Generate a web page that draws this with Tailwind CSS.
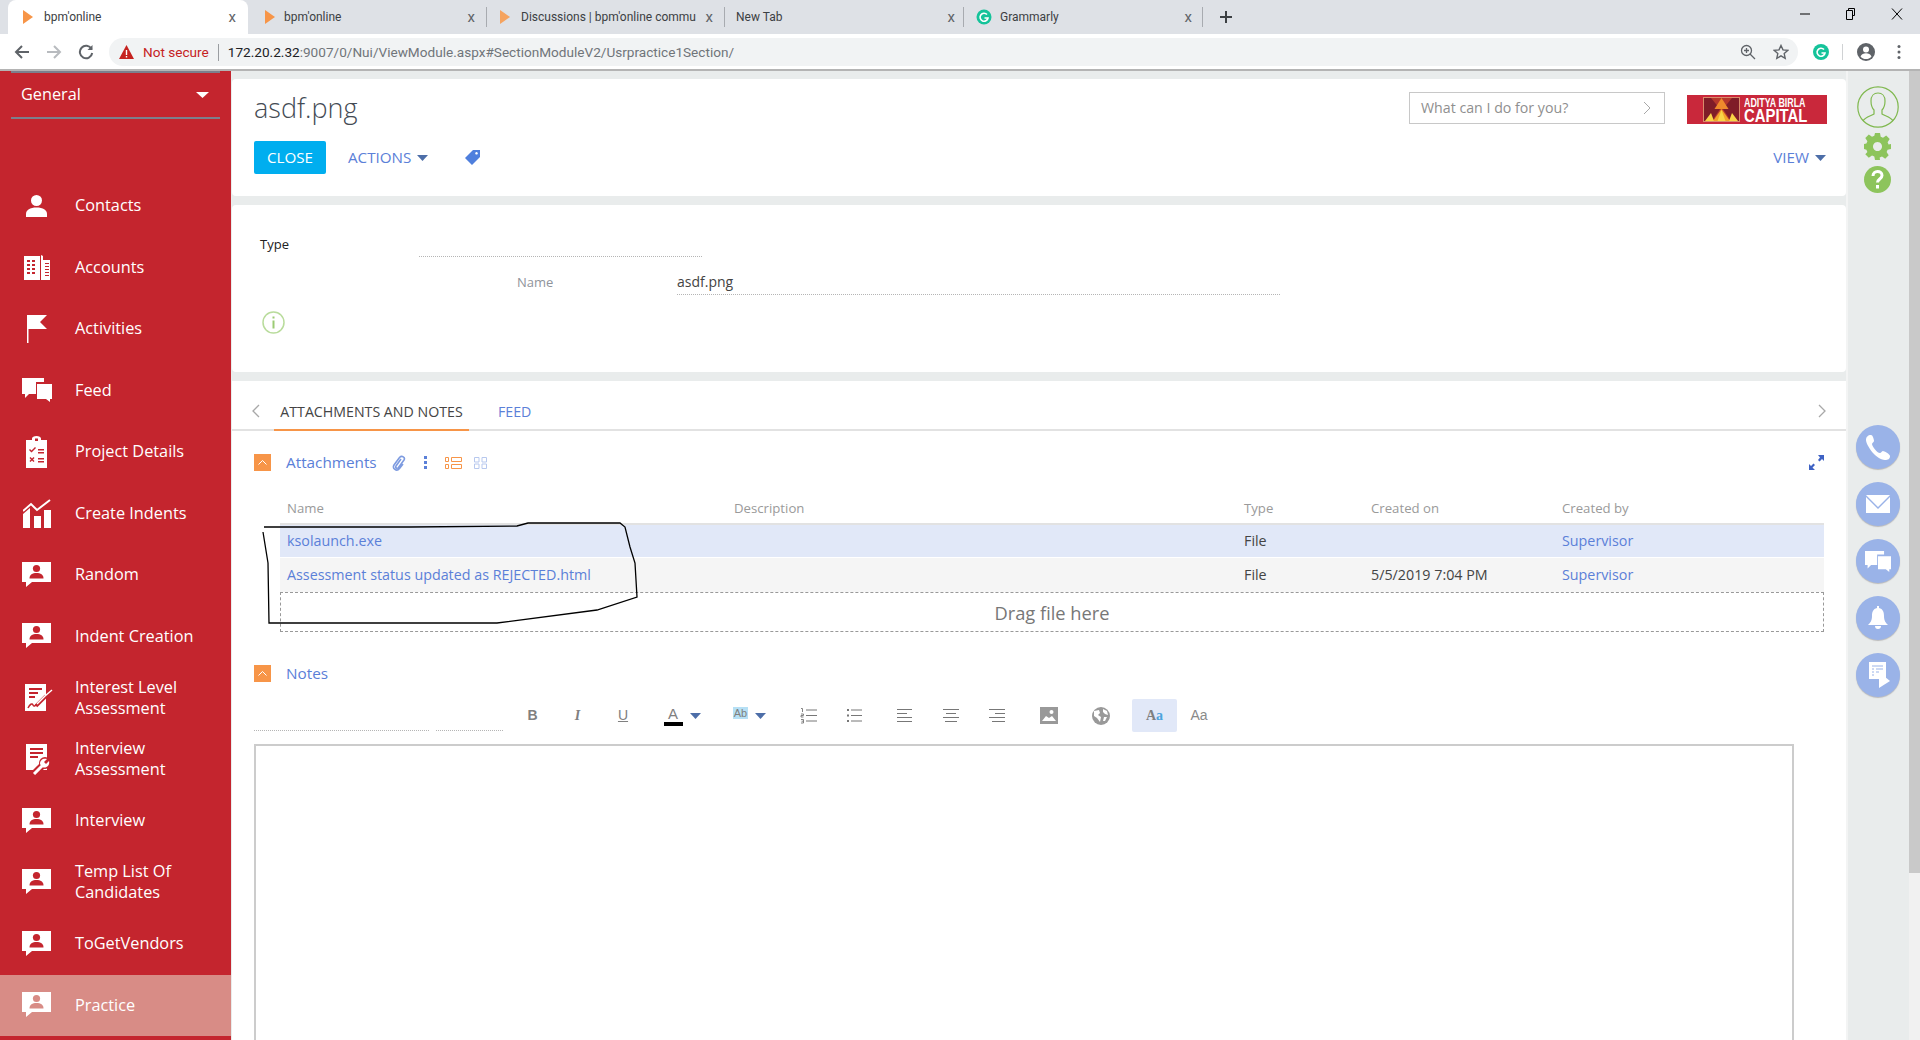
<!DOCTYPE html>
<html lang="en">
<head>
  <meta charset="UTF-8" />
  <title>bpm'online</title>
  <script src="https://cdn.jsdelivr.net/npm/@tailwindcss/browser@4"></script>
</head>
<body class="relative w-[1920px] h-[1040px] overflow-hidden flex flex-col bg-white font-['Open_Sans',sans-serif]">
  <svg class="hidden">
    <symbol id="card-person" viewBox="0 0 29 26">
      <path fill="#fff" d="M0 0h29v20H10l-6 5v-5H0z"/>
      <circle fill="currentColor" cx="14.5" cy="6.5" r="3.6"/>
      <path fill="currentColor" d="M7.5 16.5c0-4 3-5.500 7-5.500s7 1.500 7 5.500z"/>
    </symbol>
    <symbol id="chat" viewBox="0 0 30 24">
      <path fill="#fff" d="M0 0h22v4H14v12H7l-4 4v-4H0z"/>
      <path fill="#fff" d="M15 6h15v15h-2v3l-4-3h-9z"/>
    </symbol>
  </svg>

  <!-- browser tabs -->
  <div class="h-[34px] shrink-0 bg-[#dee1e6] flex pl-[8px] text-[12px] text-[#3c4043] font-['Roboto',sans-serif]">
    <div class="w-[240px] bg-white rounded-t-lg flex items-center pl-[15px] pr-[12px]">
      <svg class="w-[10px] h-[14px] mr-[11px] fill-[#f79548]" viewBox="0 0 10 14"><path d="M0 0l10 7-10 7z"/></svg>
      <span class="flex-1">bpm'online</span><span class="text-[#5f6368] text-[15px]">x</span>
    </div>
    <div class="w-[239px] flex items-center pl-[17px] pr-[11px] border-r border-[#a8abb0] my-[7px]">
      <svg class="w-[10px] h-[14px] mr-[9px] fill-[#f79548]" viewBox="0 0 10 14"><path d="M0 0l10 7-10 7z"/></svg>
      <span class="flex-1">bpm'online</span><span class="text-[#5f6368] text-[15px]">x</span>
    </div>
    <div class="w-[238px] flex items-center pl-[13px] pr-[11px] border-r border-[#a8abb0] my-[7px]">
      <svg class="w-[10px] h-[14px] mr-[11px] fill-[#f5a35f]" viewBox="0 0 10 14"><path d="M0 0l10 7-10 7z"/></svg>
      <span class="w-[176px] overflow-hidden whitespace-nowrap">Discussions | bpm'online commu</span><span class="flex-1 text-right text-[#5f6368] text-[15px]">x</span>
    </div>
    <div class="w-[239px] flex items-center pl-[11px] pr-[8px] border-r border-[#a8abb0] my-[7px]">
      <span class="flex-1">New Tab</span><span class="text-[#5f6368] text-[15px]">x</span>
    </div>
    <div class="w-[239px] flex items-center pl-[12px] pr-[10px] border-r border-[#a8abb0] my-[7px]">
      <svg class="w-[16px] h-[16px] mr-[8px]" viewBox="0 0 16 16"><circle cx="8" cy="8" r="7.500" fill="#15c39a"/><path d="M11 5.500A4 4 0 1 0 12 9H8.500" fill="none" stroke="#fff" stroke-width="1.600"/></svg>
      <span class="flex-1">Grammarly</span><span class="text-[#5f6368] text-[15px]">x</span>
    </div>
    <svg class="w-[14px] h-[14px] ml-[16px] mt-[10px] stroke-[#3c4043]" viewBox="0 0 14 14" fill="none" stroke-width="2"><path d="M7 1v12M1 7h12"/></svg>
    <div class="flex-1 flex justify-end pt-[8px] pr-[16px] gap-[32px]">
      <svg class="w-[14px] h-[12px] stroke-black" viewBox="0 0 14 12" fill="none"><path d="M2 6h10"/></svg>
      <svg class="w-[14px] h-[12px] stroke-black" viewBox="0 0 14 12" fill="none"><path d="M4.500 2.500V.5h6v7h-2M2.500 2.500h6v9h-6z"/></svg>
      <svg class="w-[14px] h-[12px] stroke-black" viewBox="0 0 14 12" fill="none"><path d="M2 .5l10 11M12 .5L2 11.500"/></svg>
    </div>
  </div>

  <!-- browser toolbar -->
  <div class="h-[37px] shrink-0 bg-white border-b-2 border-[#b4b4b4] flex items-start pt-[4px] font-['Roboto',sans-serif]">
    <div class="w-[109px] h-[28px] flex items-center pl-[14px] gap-[16px]">
      <svg class="w-[16px] h-[16px] stroke-[#5f6368]" viewBox="0 0 16 16" fill="none" stroke-width="2"><path d="M15 8H2M8 2L2 8l6 6"/></svg>
      <svg class="w-[16px] h-[16px] stroke-[#b8bbbf]" viewBox="0 0 16 16" fill="none" stroke-width="2"><path d="M1 8h13M8 2l6 6-6 6"/></svg>
      <svg class="w-[16px] h-[16px] stroke-[#5f6368]" viewBox="0 0 16 16" fill="none" stroke-width="2"><path d="M13.500 5A6.200 6.200 0 1 0 14.200 9"/><path d="M14.500 1v5h-5" fill="#5f6368" stroke="none"/></svg>
    </div>
    <div class="w-[1689px] h-[28px] bg-[#f1f3f4] rounded-full flex items-center pl-[10px] pr-[9px] text-[13.600px]">
      <svg class="w-[15px] h-[14px] mr-[9px]" viewBox="0 0 15 14"><path d="M7.500 0L15 14H0z" fill="#c5221f"/><path d="M6.800 5h1.400v5H6.800zM6.800 11h1.400v1.500H6.800z" fill="#fff"/></svg>
      <span class="text-[#c5221f]">Not secure</span>
      <span class="w-px h-[17px] bg-[#9a9da1] mx-[9px]"></span>
      <span class="flex-1 text-[#70757a]"><span class="text-[#202124]">172.20.2.32</span>:9007/0/Nui/ViewModule.aspx#SectionModuleV2/Usrpractice1Section/</span>
      <svg class="w-[16px] h-[16px] stroke-[#5f6368] mr-[17px]" viewBox="0 0 16 16" fill="none" stroke-width="1.300"><circle cx="6.500" cy="6.500" r="5"/><path d="M10 10l5 5M6.500 4v5M4 6.500h5"/></svg>
      <svg class="w-[16px] h-[16px] stroke-[#5f6368]" viewBox="0 0 16 16" fill="none" stroke-width="1.400"><path d="M8 1.500l2 4.400 4.700.5-3.500 3.200 1 4.700L8 11.900l-4.200 2.400 1-4.700L1.300 6.400 6 5.900z"/></svg>
    </div>
    <div class="flex-1 h-[28px] flex items-center pl-[15px]">
      <svg class="w-[16px] h-[16px]" viewBox="0 0 16 16"><circle cx="8" cy="8" r="8" fill="#15c39a"/><path d="M11 5.500A4 4 0 1 0 12 9H8.500" fill="none" stroke="#fff" stroke-width="1.600"/></svg>
      <span class="w-px h-[16px] bg-[#d0d2d4] ml-[13px] mr-[14px]"></span>
      <svg class="w-[18px] h-[18px]" viewBox="0 0 18 18"><circle cx="9" cy="9" r="9" fill="#5f6368"/><circle cx="9" cy="6.500" r="3" fill="#fff"/><path d="M3.500 13.500c1-2.500 3-3.200 5.500-3.200s4.500.7 5.500 3.200C13 15.500 11 16 9 16s-4-.5-5.500-2.500z" fill="#fff"/></svg>
      <svg class="w-[4px] h-[16px] ml-[22px] fill-[#5f6368]" viewBox="0 0 4 16"><circle cx="2" cy="2.500" r="1.500"/><circle cx="2" cy="8" r="1.500"/><circle cx="2" cy="13.500" r="1.500"/></svg>
    </div>
  </div>

  <div class="flex-1 flex min-h-0">
    <!-- sidebar -->
    <aside class="w-[231px] shrink-0 bg-[#c4252e] text-white text-[16.300px] leading-[21px]">
      <div class="h-[2px] mx-[11px] bg-[#7c7f8c]"></div>
      <div class="h-[46px] mx-[11px] border-b-2 border-[#7c7f8c] flex items-center justify-between pl-[10px] pr-[11px] pb-[1px]">
        <span>General</span>
        <svg class="w-[13px] h-[6px] fill-white" viewBox="0 0 13 6"><path d="M0 0h13L6.500 6z"/></svg>
      </div>
      <nav class="pt-[56px]">
        <a class="h-[61.5px] flex items-center">
          <span class="w-[75px] flex justify-center pr-[2px] shrink-0"><svg class="w-[21px] h-[22px] fill-white" viewBox="0 0 21 22"><circle cx="10.500" cy="5.500" r="5.500"/><path d="M0 22v-3c0-4 4-6.500 10.500-6.500S21 15 21 19v3z"/></svg></span>Contacts
        </a>
        <a class="h-[61.5px] flex items-center">
          <span class="w-[75px] flex justify-center pr-[2px] shrink-0"><svg class="w-[26px] h-[25px]" viewBox="0 0 26 25"><path fill="#fff" d="M0 1h16v24H0zM17 0l2 1v24h-2zM19 5h7v20h-7z"/><path fill="#c4252e" d="M3 5h3v2H3zM8 5h3v2H8zM3 9h3v2H3zM8 9h3v2H8zM3 13h3v2H3zM8 13h3v2H8zM3 17h3v2H3zM8 17h3v2H8zM21 8h4v1h-4zM21 11h4v1h-4zM21 14h4v1h-4zM21 17h4v1h-4zM21 20h4v1h-4z"/></svg></span>Accounts
        </a>
        <a class="h-[61.5px] flex items-center">
          <span class="w-[75px] flex justify-center pr-[2px] shrink-0"><svg class="w-[20px] h-[28px] fill-white" viewBox="0 0 20 28"><path d="M0 0h1.500v28H0zM1.500 0H20l-7 7 7 7H1.500z"/></svg></span>Activities
        </a>
        <a class="h-[61.5px] flex items-center">
          <span class="w-[75px] flex justify-center pr-[2px] shrink-0"><svg class="w-[30px] h-[24px]"><use href="#chat"/></svg></span>Feed
        </a>
        <a class="h-[61.5px] flex items-center">
          <span class="w-[75px] flex justify-center pr-[2px] shrink-0"><svg class="w-[21px] h-[32px]" viewBox="0 0 21 32"><path fill="#fff" d="M0 4h6V2.500C6 1 8 0 10.500 0S15 1 15 2.500V4h6v28H0z"/><path fill="#c4252e" d="M9 2.500h3V5H9zM3 14l1-1 1.500 1.500L9 11l1 1-4.500 4.500zM3.500 22l1-1 1.500 1.500L7.500 21l1 1-1.500 1.500L8.500 25l-1 1L6 24.500 4.500 26l-1-1L5 23.500zM12 13h6v1.500h-6zM12 16h6v1.500h-6zM12 22h6v1.500h-6zM12 25h6v1.500h-6z"/></svg></span>Project Details
        </a>
        <a class="h-[61.5px] flex items-center">
          <span class="w-[75px] flex justify-center pr-[2px] shrink-0"><svg class="w-[28px] h-[29px]" viewBox="0 0 28 29"><path fill="none" stroke="#fff" stroke-width="2" d="M0 12l8-7 6 6L27 1"/><path fill="#fff" d="M0 15l7-6v20H0zM11 17h7v12h-7zM21 11h7v18h-7z"/></svg></span>Create Indents
        </a>
        <a class="h-[61.5px] flex items-center">
          <span class="w-[75px] flex justify-center pr-[2px] shrink-0 text-[#c4252e]"><svg class="w-[29px] h-[26px]"><use href="#card-person"/></svg></span>Random
        </a>
        <a class="h-[61.5px] flex items-center">
          <span class="w-[75px] flex justify-center pr-[2px] shrink-0 text-[#c4252e]"><svg class="w-[29px] h-[26px]"><use href="#card-person"/></svg></span>Indent Creation
        </a>
        <a class="h-[61.5px] flex items-center">
          <span class="w-[75px] flex justify-center pr-[2px] shrink-0"><svg class="w-[28px] h-[27px] ml-[4px]" viewBox="0 0 28 27"><path fill="#fff" d="M0 0h21v27H0z"/><path fill="#c4252e" d="M4 4h13v2H4zM4 8h9v2H4zM4 12h6v2H4z"/><path fill="none" stroke="#c4252e" stroke-width="3.500" d="M21 12L11 22"/><path fill="none" stroke="#c4252e" stroke-width="1.500" d="M3 24c2-4 4-5 5-3s2 1 4-1"/><path fill="none" stroke="#fff" stroke-width="1.500" d="M20 12l7-6M12 20l9-9"/></svg></span><span>Interest Level<br />Assessment</span>
        </a>
        <a class="h-[61.5px] flex items-center">
          <span class="w-[75px] flex justify-center pr-[2px] shrink-0"><svg class="w-[24px] h-[31px] ml-[2px]" viewBox="0 0 24 31"><path fill="#fff" d="M0 0h21v26H0z"/><path fill="#c4252e" d="M4 4h13v2H4zM4 8h13v2H4zM4 12h8v2H4z"/><path fill="none" stroke="#c4252e" stroke-width="7" d="M9 29l9-9"/><circle cx="19" cy="19" r="6" fill="#c4252e"/><path fill="none" stroke="#fff" stroke-width="3" d="M8 30l9-9"/><path fill="#fff" d="M14 20c0-4 3-6 7-5l-3 3 2 2 3-3c1 4-2 8-7 6z"/></svg></span><span>Interview<br />Assessment</span>
        </a>
        <a class="h-[61.5px] flex items-center">
          <span class="w-[75px] flex justify-center pr-[2px] shrink-0 text-[#c4252e]"><svg class="w-[29px] h-[26px]"><use href="#card-person"/></svg></span>Interview
        </a>
        <a class="h-[61.5px] flex items-center">
          <span class="w-[75px] flex justify-center pr-[2px] shrink-0 text-[#c4252e]"><svg class="w-[29px] h-[26px]"><use href="#card-person"/></svg></span><span>Temp List Of<br />Candidates</span>
        </a>
        <a class="h-[61.5px] flex items-center">
          <span class="w-[75px] flex justify-center pr-[2px] shrink-0 text-[#c4252e]"><svg class="w-[29px] h-[26px]"><use href="#card-person"/></svg></span>ToGetVendors
        </a>
        <a class="h-[61.5px] flex items-center bg-[#d88c86]">
          <span class="w-[75px] flex justify-center pr-[2px] shrink-0 text-[#d88c86]"><svg class="w-[29px] h-[26px]"><use href="#card-person"/></svg></span>Practice
        </a>
      </nav>
    </aside>

    <!-- page -->
    <main class="w-[1615px] shrink-0 bg-[#e9ecec] pt-[8px] pl-px flex flex-col gap-[9px] min-h-0">
      <!-- header card -->
      <section class="h-[117px] shrink-0 bg-white rounded-sm pl-[22px] pr-[19px]">
        <div class="h-[62px] flex items-start">
          <h1 class="flex-1 text-[27px] font-light leading-[36px] pt-[11px] text-[#444b54]">asdf.png</h1>
          <div class="w-[256px] h-[32px] mt-[13px] border border-[#c8c8c8] flex items-center justify-between pl-[11px] pr-[13px] text-[14.200px] text-[#8f8f8f]">
            <span>What can I do for you?</span>
            <svg class="w-[8px] h-[14px] stroke-[#a8a8a8]" viewBox="0 0 8 14" fill="none"><path d="M1 1l6 6-6 6"/></svg>
          </div>
          <div class="w-[140px] h-[29px] mt-[16px] ml-[22px] bg-[#c9283b] flex items-center pl-[16px] gap-[4px]">
            <svg class="w-[37px] h-[25px]" viewBox="0 0 37 25">
              <rect width="37" height="25" fill="#d98b6a"/>
              <rect x="1" y="1" width="35" height="23" fill="#b5382c"/>
              <path fill="#7f1d28" d="M1 1h7l9 11-8 12H1zM36 1h-7l-9 11 8 12h8z"/>
              <path fill="#ef8a2c" d="M18.500 1l7 11h-14z"/>
              <path fill="#f2a329" d="M10 24l8.500-12L27 24z"/>
              <path fill="#f8d546" d="M18.500 13l4 11h-8zM2 24l6-8 3 8zM35 24l-6-8-3 8z"/>
            </svg>
            <div class="w-[63px] text-white font-['Liberation_Sans',sans-serif] leading-none">
              <div class="w-[81px] text-[12px] h-[11px] font-bold whitespace-nowrap origin-left scale-x-[0.74]">ADITYA BIRLA</div>
              <div class="w-[74px] text-[17.500px] h-[15px] font-bold whitespace-nowrap origin-left scale-x-[0.85]">CAPITAL</div>
            </div>
          </div>
        </div>
        <div class="h-[33px] flex items-center text-[15.200px] text-[#5b80d8]">
          <button class="w-[72px] h-[33px] bg-[#00aeef] text-white rounded-[2px]">CLOSE</button>
          <span class="ml-[22px] -mt-[1px]">ACTIONS</span>
          <svg class="w-[11px] h-[6px] ml-[6px] fill-[#4d6ea8]" viewBox="0 0 11 6"><path d="M0 0h11L5.500 6z"/></svg>
          <svg class="w-[15px] h-[15px] ml-[37px] fill-[#4f7fdd]" viewBox="0 0 15 15"><path d="M8 0h7v7l-8 8-7-7zM11.500 2a1.300 1.300 0 1 0 .01 0z" fill-rule="evenodd"/></svg>
          <span class="ml-auto mr-[1px] -mt-[1px]">VIEW</span>
          <svg class="w-[11px] h-[6px] ml-[5px] mr-[1px] fill-[#4d6ea8]" viewBox="0 0 11 6"><path d="M0 0h11L5.500 6z"/></svg>
        </div>
      </section>

      <!-- form card -->
      <section class="h-[167px] shrink-0 bg-white rounded-sm pl-[28px]">
        <div class="flex h-[52px] pt-[29px] text-[13px] text-[#222]">
          <span class="w-[159px] leading-[20px]">Type</span>
          <div class="w-[283px] border-b border-dotted border-[#b5b5b5]"></div>
        </div>
        <div class="flex h-[38px] items-end ml-[257px] text-[13px]">
          <span class="w-[160px] text-[#8f949b] pb-[3px]">Name</span>
          <span class="w-[603px] text-[14px] text-[#444] border-b border-dotted border-[#b5b5b5] pb-[2px]">asdf.png</span>
        </div>
        <svg class="w-[23px] h-[23px] mt-[16px] ml-[2px]" viewBox="0 0 23 23"><circle cx="11.500" cy="11.500" r="10.500" fill="none" stroke="#b9dc9c" stroke-width="1.500"/><path fill="#9ccb74" d="M10.500 5.500h2v2h-2zM10.500 9.500h2v8h-2z"/></svg>
      </section>

      <!-- tabs card -->
      <section class="flex-1 min-h-0 overflow-hidden bg-white">
        <div class="h-[50px] border-b-2 border-[#e2e2e2] flex items-end text-[14.200px] pr-[20px]">
          <svg class="w-[8px] h-[14px] ml-[20px] mb-[11px] stroke-[#a8a8a8]" viewBox="0 0 8 14" fill="none" stroke-width="1.300"><path d="M7 1L1 7l6 6"/></svg>
          <div class="ml-[14px] w-[195px] h-[36px] text-center -mb-[2px] border-b-2 border-[#f79548] text-[#444] leading-[34px]">ATTACHMENTS AND NOTES</div>
          <div class="ml-[29px] h-[34px] leading-[34px] text-[#5b80d8]">FEED</div>
          <svg class="w-[8px] h-[14px] ml-auto mb-[11px] stroke-[#a8a8a8]" viewBox="0 0 8 14" fill="none" stroke-width="1.300"><path d="M1 1l6 6-6 6"/></svg>
        </div>

        <!-- attachments -->
        <div class="flex items-center h-[17px] mt-[23px] ml-[22px] mr-[22px] text-[15.300px] text-[#5b80d8]">
          <span class="w-[17px] h-[17px] bg-[#f79548] flex items-center justify-center"><svg class="w-[9px] h-[5px] stroke-white" viewBox="0 0 9 5" fill="none"><path d="M.5 4.500l4-4 4 4"/></svg></span>
          <span class="ml-[15px]">Attachments</span>
          <svg class="w-[14px] h-[16px] ml-[15px] stroke-[#7d9be0]" viewBox="0 0 14 16" fill="none" stroke-width="1.600"><path d="M9 4l-5 7c-1 2 1 3 2.500 1.500L12 5c1.500-2.500-2-5-4.500-2.500L2 10c-2 3.500 2.500 7 5.500 3.500L11 9"/></svg>
          <svg class="w-[3px] h-[13px] ml-[18px] fill-[#5b80d8]" viewBox="0 0 3 13"><rect width="3" height="3"/><rect y="5" width="3" height="3"/><rect y="10" width="3" height="3"/></svg>
          <svg class="w-[17px] h-[12px] ml-[18px] stroke-[#f79548]" viewBox="0 0 17 12" fill="none"><path d="M.5.5h3v4h-3zM.5 7.500h3v4h-3zM6.500.5h10v4h-10zM6.500 7.500h10v4h-10z"/></svg>
          <svg class="w-[13px] h-[12px] ml-[12px] stroke-[#b7c8ee]" viewBox="0 0 13 12" fill="none"><path d="M.5.5h4.500v4.500H.5zM8 .5h4.500v4.500H8zM.5 7h4.500v4.500H.5zM8 7h4.500v4.500H8z"/></svg>
          <svg class="w-[15px] h-[15px] ml-auto fill-[#3f62c4]" viewBox="0 0 15 15"><path d="M9 0h6v6l-2-2-2.500 2.500-1.500-1.500L11 2.500zM6 15H0V9l2 2 2.500-2.500L6 10 3.500 12.500z"/></svg>
        </div>

        <div class="ml-[48px] mr-[22px] mt-[26px] text-[14.300px]">
          <div class="grid grid-cols-[447px_510px_127px_191px_269px] h-[28px] items-center pb-[3px] border-b-2 border-[#e2e2e2] text-[13.200px] text-[#9a9a9a]">
            <span class="pl-[7px]">Name</span><span class="pl-[7px]">Description</span><span class="pl-[7px]">Type</span><span class="pl-[7px]">Created on</span><span class="pl-[7px]">Created by</span>
          </div>
          <div class="grid grid-cols-[447px_510px_127px_191px_269px] h-[33px] items-center bg-[#e1e8f8] border-b border-white">
            <span class="pl-[7px] text-[#5b80d8]">ksolaunch.exe</span><span></span><span class="pl-[7px] text-[#444]">File</span><span></span><span class="pl-[7px] text-[#5b80d8]">Supervisor</span>
          </div>
          <div class="grid grid-cols-[447px_510px_127px_191px_269px] h-[34px] items-center bg-[#f5f5f5]">
            <span class="pl-[7px] text-[#5b80d8] whitespace-nowrap">Assessment status updated as REJECTED.html</span><span></span><span class="pl-[7px] text-[#444]">File</span><span class="pl-[7px] text-[#444]">5/5/2019 7:04 PM</span><span class="pl-[7px] text-[#5b80d8]">Supervisor</span>
          </div>
          <div class="h-[40px] pt-[2px] border border-dashed border-[#999] flex items-center justify-center text-[18.300px] text-[#777]">Drag file here</div>
        </div>

        <!-- notes -->
        <div class="flex items-center h-[17px] mt-[33px] ml-[22px] text-[15.300px] text-[#5b80d8]">
          <span class="w-[17px] h-[17px] bg-[#f79548] flex items-center justify-center"><svg class="w-[9px] h-[5px] stroke-white" viewBox="0 0 9 5" fill="none"><path d="M.5 4.500l4-4 4 4"/></svg></span>
          <span class="ml-[15px]">Notes</span>
        </div>

        <div class="flex items-end h-[49px] ml-[22px]">
          <div class="w-[175px] border-b border-dotted border-[#b5b5b5]"></div>
          <div class="w-[67px] ml-[7px] border-b border-dotted border-[#b5b5b5]"></div>
          <div class="flex items-center h-[33px] ml-[7px] mb-[-1px] text-[#808080]">
            <span class="w-[45px] text-center text-[14px] font-bold font-['Liberation_Sans',sans-serif]">B</span>
            <span class="w-[45px] text-center text-[14px] font-bold italic font-['Liberation_Serif',serif]">I</span>
            <span class="w-[46px] text-center text-[14px] underline font-['Liberation_Sans',sans-serif]">U</span>
            <span class="w-[69px] flex items-center justify-center gap-[7px] pl-[3px]">
              <span class="w-[19px] h-[21px] text-center text-[15px] leading-[17px] border-b-4 border-black font-['Liberation_Sans',sans-serif]">A</span>
              <svg class="w-[11px] h-[6px] fill-[#4d6ea8]" viewBox="0 0 11 6"><path d="M0 0h11L5.500 6z"/></svg>
            </span>
            <span class="w-[69px] flex items-center justify-center gap-[7px]">
              <span class="h-[12px] bg-[#b6e0f5] text-[11px] leading-[12px] px-[1px] -mt-[5px] font-['Liberation_Sans',sans-serif]">Ab</span>
              <svg class="w-[11px] h-[6px] fill-[#4d6ea8]" viewBox="0 0 11 6"><path d="M0 0h11L5.500 6z"/></svg>
            </span>
            <span class="w-[48px] flex justify-center"><svg class="w-[17px] h-[17px] stroke-[#777]" viewBox="0 0 17 17" fill="none"><path d="M6 3h11M6 8.500h11M6 14h11"/><path d="M1 1.500h1.500V5M1 7h2.500v1.500H1V10h2.500M1 12.500h2.500V16H1M1.500 14.200h2" stroke-width=".9"/></svg></span>
            <span class="w-[44px] flex justify-center"><svg class="w-[15px] h-[15px] stroke-[#777]" viewBox="0 0 15 15" fill="none"><path d="M4 2h11M4 7.500h11M4 13h11"/><path d="M0 2h2M0 7.500h2M0 13h2" stroke-width="2"/></svg></span>
            <span class="w-[52px] pl-[4px] flex justify-center"><svg class="w-[15px] h-[15px] stroke-[#777]" viewBox="0 0 15 15" fill="none"><path d="M0 1.500h15M0 5.500h10M0 9.500h15M0 13.500h15"/></svg></span>
            <span class="w-[45px] flex justify-center"><svg class="w-[16px] h-[15px] stroke-[#777]" viewBox="0 0 16 15" fill="none"><path d="M0 1.500h16M3 5.500h10M0 9.500h16M2 13.500h12"/></svg></span>
            <span class="w-[50px] pr-[3px] flex justify-center"><svg class="w-[16px] h-[15px] stroke-[#777]" viewBox="0 0 16 15" fill="none"><path d="M0 1.500h16M6 5.500h10M0 9.500h16M3 13.500h13"/></svg></span>
            <span class="w-[52px] flex justify-center"><svg class="w-[18px] h-[17px]" viewBox="0 0 18 17"><rect width="18" height="17" fill="#999"/><path fill="#fff" d="M2 14l4-5 3 2 3-2 4 5z"/><circle cx="11.500" cy="5" r="2" fill="#fff"/></svg></span>
            <span class="w-[52px] flex justify-center"><svg class="w-[18px] h-[18px]" viewBox="0 0 18 18"><circle cx="9" cy="9" r="9" fill="#999"/><path fill="#fff" d="M2 4l5-1 1 3-2 2 3 2-1 5-3-4-3-2zM11 2l4 2 1 4-3-1-2-2zM12 10l3 0-2 4-2 0z"/></svg></span>
            <span class="w-[45px] h-[33px] ml-[5px] bg-[#e1e8f8] rounded-[2px] flex items-center justify-center text-[14px] font-bold font-['Liberation_Serif',serif] text-[#7f7f7f]">A<span class="text-[#4ba3dc]">a</span></span>
            <span class="w-[44px] text-center text-[14px] text-[#8a8a8a] font-['Liberation_Sans',sans-serif]">Aa</span>
          </div>
        </div>
        <div class="w-[1540px] h-[400px] mt-[13px] ml-[22px] border-2 border-[#cccccc]"></div>
      </section>
    </main>

    <!-- right rail -->
    <aside class="w-[63px] shrink-0 bg-[#e9ecec] border-l-2 border-[#f3f4f4] flex flex-col items-center pr-[1px]">
      <svg class="w-[42px] h-[42px] mt-[15px] -ml-[1px] shrink-0" viewBox="0 0 42 42" fill="none" stroke="#7fb84e" stroke-width="1.200"><circle cx="21" cy="21" r="20.200"/><path d="M6 35c2-4 8-5 11-7v-4c-2-2-3-5-3-9 0-5 3-8 7-8s7 3 7 8c0 4-1 7-3 9v4c3 2 9 3 11 7"/></svg>
      <svg class="w-[27px] h-[27px] mt-[5px] -ml-[2px] shrink-0 fill-[#8dc45c]" viewBox="0 0 27 27"><path fill-rule="evenodd" d="M11 0h5l.7 3.700 2.300 1 3.200-2.100 3.500 3.500-2.100 3.200 1 2.300L27 11v5l-3.400.7-1 2.300 2.100 3.200-3.500 3.500-3.200-2.100-2.300 1L16 27h-5l-.7-3.400-2.300-1-3.200 2.100-3.500-3.500L3.400 19l-1-2.300L0 16v-5l2.400-.4 1-2.300-2.100-3.200 3.500-3.500L8 3.700l2.300-1zM13.500 9a4.500 4.500 0 1 0 .01 0z"/></svg>
      <svg class="w-[27px] h-[27px] mt-[6px] -ml-[2px] shrink-0" viewBox="0 0 27 27"><circle cx="13.500" cy="13.500" r="13.500" fill="#8dc45c"/><path d="M9 10c0-6 9-6 9-.5 0 3.500-4.500 3.500-4.500 7" fill="none" stroke="#fff" stroke-width="3"/><rect x="12" y="19" width="3" height="3.500" fill="#fff"/></svg>
      <div class="mt-[232px] flex flex-col gap-[13px] items-center">
        <div class="w-[44px] h-[44px] rounded-full bg-[#9ab3e8] shadow-[0_1px_1px_#bbb] flex items-center justify-center">
          <svg class="w-[24px] h-[25px] fill-white" viewBox="0 0 24 25"><path d="M5 0c2 0 3 5 3 6S6 8 6 9c0 2 5 9 8 9 1 0 2-2 3-2s7 3 7 5c0 3-2 4-5 4C10 25 0 10 0 5 0 2 2 0 5 0z"/></svg>
        </div>
        <div class="w-[44px] h-[44px] rounded-full bg-[#9ab3e8] shadow-[0_1px_1px_#bbb] flex items-center justify-center">
          <svg class="w-[24px] h-[18px] fill-white" viewBox="0 0 24 18"><path d="M0 0l12 12L24 0zM0 2v16h24V2L12 14z"/></svg>
        </div>
        <div class="w-[44px] h-[44px] rounded-full bg-[#9ab3e8] shadow-[0_1px_1px_#bbb] flex items-center justify-center">
          <svg class="w-[26px] h-[21px]"><use href="#chat"/></svg>
        </div>
        <div class="w-[44px] h-[44px] rounded-full bg-[#9ab3e8] shadow-[0_1px_1px_#bbb] flex items-center justify-center">
          <svg class="w-[20px] h-[24px] fill-white" viewBox="0 0 20 24"><path d="M9 0h2v2c4 1 5 4 5 8 0 5 2 7 4 9H0c2-2 4-4 4-9 0-4 1-7 5-8zM7 20h6a3 3 0 0 1-6 0z"/></svg>
        </div>
        <div class="w-[44px] h-[44px] rounded-full bg-[#9ab3e8] shadow-[0_1px_1px_#bbb] flex items-center justify-center">
          <svg class="w-[21px] h-[26px] ml-[3px]" viewBox="0 0 21 26"><path fill="#fff" d="M0 0h17v20H10v-3H0z"/><path fill="#fff" d="M10 10l11 9-11 7z"/><path stroke="#9ab3e8" d="M3 4h11M3 7h2M7 7h7M3 10h2M7 10h3M3 13h2"/></svg>
        </div>
      </div>
    </aside>

    <!-- scrollbar -->
    <div class="w-[11px] shrink-0 bg-[#f1f1f1]"><div class="h-[802px] bg-[#c9c9c9]"></div></div>
  </div>

  <!-- pen annotation drawn on top of the table -->
  <svg class="absolute left-0 top-0 w-[1920px] h-[1040px] pointer-events-none" viewBox="0 0 1920 1040" fill="none" stroke="#000" stroke-width="1.300">
    <path d="M264 527L410 527L517 526L528 523L620 523L625 527L630 547L635 563L637 597L597 610L497 623L269 623L268 563L263 532"/>
  </svg>
</body>
</html>
